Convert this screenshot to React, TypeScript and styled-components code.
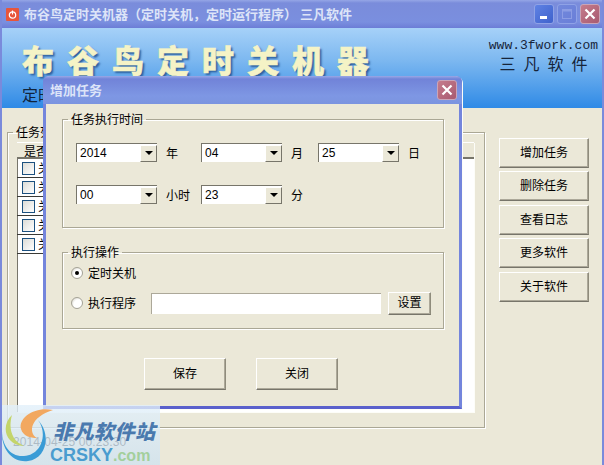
import React from 'react'
import styled, { createGlobalStyle } from 'styled-components'

const CJK = `"Noto Sans CJK SC", "Liberation Sans", sans-serif`

const GlobalStyle = createGlobalStyle`
  html, body {
    margin: 0;
    padding: 0;
    background: #ebe8d8;
  }
  * {
    box-sizing: border-box;
  }
`

const Window = styled.div`
  position: relative;
  width: 604px;
  height: 465px;
  overflow: hidden;
  display: flex;
  flex-direction: column;
  background: #ebe8d8;
  border-left: 2px solid #7a8adb;
  border-right: 2px solid #7a8adb;
  font: 12px/16px ${CJK};
  color: #000;
`

const TitleBar = styled.div`
  flex: none;
  height: 28px;
  margin: 0 -2px;
  padding: 0 4px 0 6px;
  display: flex;
  align-items: center;
  background: linear-gradient(180deg, #95a6e6 0, #7a8cdb 3px, #7a8fdf 22px, #6c7dd6 28px);
`

const TitleText = styled.span`
  flex: 1;
  margin-left: 5px;
  font-size: 13px;
  font-weight: 700;
  color: #dde4f8;
  white-space: pre;
`

const CaptionButton = styled.div<{ $tone: 'min' | 'max' | 'close' }>`
  width: 20px;
  height: 20px;
  margin-left: 3px;
  border-radius: 3px;
  border: 1px solid ${p => (p.$tone === 'close' ? '#c9a5b8' : '#8fa2e6')};
  display: flex;
  align-items: center;
  justify-content: center;
  background: ${p =>
    p.$tone === 'close'
      ? 'linear-gradient(135deg, #c57c8c, #a85a70)'
      : p.$tone === 'min'
        ? 'linear-gradient(135deg, #5f82e4, #3f62cc)'
        : 'linear-gradient(135deg, #7288dc, #6a7fd8)'};
`

const Banner = styled.div`
  flex: none;
  height: 80px;
  padding: 10px 4px 0 20px;
  display: flex;
  justify-content: space-between;
  background: linear-gradient(180deg, #a6d1f8 0, #7db8f0 40%, #2f8ae6 100%);
`

const BannerTitle = styled.div`
  margin-top: 1px;
  font-size: 32px;
  line-height: 40px;
  font-weight: 900;
  letter-spacing: 13px;
  color: #f5f3c6;
  -webkit-text-stroke: 0.5px #f5f3c6;
  text-shadow: 2px 2px 2px #2c5f9e;
  white-space: nowrap;
`

const BannerSub = styled.div`
  font-size: 16px;
  line-height: 20px;
  margin-top: 5px;
  color: #10243c;
`

const BannerVendor = styled.div`
  text-align: center;
  color: #16243a;
`

const VendorUrl = styled.div`
  font: 13px/16px "Liberation Mono", monospace;
`

const VendorName = styled.div`
  font-size: 16px;
  line-height: 18px;
  letter-spacing: 8px;
  margin-right: -8px;
`

const Body = styled.div`
  flex: 1;
  min-height: 0;
  padding: 17px 0 0 5px;
  display: flex;
  gap: 14px;
`

const Group = styled.fieldset<{ $width: number; $height: number }>`
  margin: 0;
  min-width: 0;
  width: ${p => p.$width}px;
  height: ${p => p.$height}px;
  padding: 0;
  border: 1px solid #aaa795;
  box-shadow: 1px 1px 0 #fff, inset 1px 1px 0 #fff;
`

const GroupLegend = styled.legend`
  margin-left: 5px;
  padding: 0 3px;
  font-size: 12px;
  line-height: 14px;
`

const GroupContent = styled.div<{ $top: number; $left: number }>`
  padding: ${p => p.$top}px 0 0 ${p => p.$left}px;
`

const TaskList = styled.div`
  width: 457px;
  height: 270px;
  background: #fff;
  box-shadow: inset 1px 1px 0 #77756a, 1px 1px 0 #fdfdf8;
`

const ListHeader = styled.div`
  height: 17px;
  padding: 0 0 0 7px;
  background: #ebe8d8;
  border-top: 1px solid #fff;
  border-bottom: 2px solid #77756a;
  font-size: 12px;
  line-height: 16px;
`

const ListRow = styled.div`
  width: 300px;
  height: 19px;
  padding-left: 5px;
  display: flex;
  align-items: center;
  gap: 3px;
  border-bottom: 1px solid #3a3a36;
  font-size: 12px;
`

const CheckBox = styled.span`
  width: 13px;
  height: 13px;
  border: 1px solid #1c5180;
  background: linear-gradient(135deg, #dcdcd7, #fff);
`

const SideColumn = styled.div`
  margin-top: 13px;
  display: flex;
  flex-direction: column;
  gap: 3.4px;
`

const Button = styled.button<{ $w: number; $h: number }>`
  width: ${p => p.$w}px;
  height: ${p => p.$h}px;
  padding: 0 0 2px;
  background: #ebe8d8;
  border: 1px solid;
  border-color: #fff #8f8c7c #77756a #fff;
  box-shadow: inset -1px -1px 0 #aca899;
  font: 12px/16px ${CJK};
  color: #000;
`

const StatusLine = styled.div`
  flex: none;
  height: 37px;
  padding: 6px 0 0 11px;
  font: 12px/16px "Liberation Sans", sans-serif;
  color: #333;
  letter-spacing: 0.1px;
`

/* the dialog floats over the main window */
const Dialog = styled.div`
  position: absolute;
  left: 41px;
  top: 76px;
  width: 419px;
  height: 333px;
  display: flex;
  flex-direction: column;
  background: #ebe8d8;
  border: 3px solid #7485dc;
  border-top: 0;
  border-bottom-color: #5a60cc;
  border-radius: 6px 6px 0 0;
  box-shadow: 1px 1px 0 #fdfdf8;
`

const DialogTitleBar = styled.div`
  flex: none;
  height: 28px;
  margin: 0 -3px;
  padding: 0 5px 0 7px;
  display: flex;
  align-items: center;
  justify-content: space-between;
  border-radius: 6px 6px 0 0;
  background: linear-gradient(180deg, #99a8e6 0, #7183d8 3px, #7e97e4 20px, #7b94e0 28px);
  font-size: 13px;
  font-weight: 700;
  color: #dde4f8;
`

const DialogBody = styled.div`
  flex: 1;
  padding: 8px 16px 0;
`

const GroupGap = styled.div`
  height: 17px;
`

const FieldRow = styled.div`
  height: 19px;
  margin-bottom: 23px;
  display: flex;
  align-items: center;
`

const Combo = styled.div`
  width: 81px;
  height: 19px;
  padding-left: 4px;
  display: flex;
  align-items: center;
  justify-content: space-between;
  background: #fff;
  box-shadow: inset 1px 1px 0 #77756a;
  font: 12px/16px "Liberation Sans", sans-serif;
`

const ComboArrow = styled.span`
  width: 17px;
  height: 17px;
  margin-top: 1px;
  display: flex;
  align-items: center;
  justify-content: center;
  background: #ebe8d8;
  border: 1px solid;
  border-color: #fff #77756a #77756a #fff;

  &::after {
    content: '';
    border-style: solid;
    border-width: 4px 4px 0;
    border-color: #000 transparent transparent;
  }
`

const FieldLabel = styled.span<{ $w: number }>`
  width: ${p => p.$w}px;
  padding-left: 9px;
  font-size: 12px;
`

const RadioRow = styled.div<{ $mt?: number }>`
  height: 22px;
  margin-top: ${p => p.$mt || 0}px;
  display: flex;
  align-items: center;
  gap: 5px;
`

const Radio = styled.span<{ $on?: boolean }>`
  width: 12px;
  height: 12px;
  border-radius: 50%;
  display: flex;
  align-items: center;
  justify-content: center;
  background: radial-gradient(circle at 65% 65%, #fff 50%, #c9c6b8);
  border: 1px solid #a5a397;

  &::after {
    content: '';
    width: 4px;
    height: 4px;
    border-radius: 50%;
    background: ${p => (p.$on ? '#000' : 'transparent')};
  }
`

const PathInput = styled.div`
  width: 230px;
  height: 21px;
  margin-left: 10px;
  background: #fff;
  box-shadow: inset 1px 1px 0 #aca899;
`

const InlineButton = styled(Button)`
  margin-left: 2px;
`

const DialogFooter = styled.div`
  margin-top: 29px;
  padding-left: 82px;
  display: flex;
  gap: 30px;
`

/* semi transparent site stamp lying over the bottom left corner */
const Stamp = styled.div`
  position: absolute;
  left: -2px;
  top: 405px;
  width: 160px;
  height: 60px;
  background: linear-gradient(180deg, rgba(226, 240, 250, 0.8), rgba(205, 226, 242, 0.72));
`

const StampLogo = styled.svg`
  position: absolute;
  left: 0;
  top: 0;
`

const StampName = styled.div`
  position: absolute;
  left: 53px;
  top: 14px;
  font-size: 20px;
  line-height: 24px;
  font-weight: 900;
  font-style: italic;
  letter-spacing: 0.5px;
  color: #3b6ea8;
  opacity: 0.9;
  white-space: nowrap;
`

const StampDomain = styled.div`
  position: absolute;
  left: 50px;
  top: 40px;
  font: 700 18px/20px "Liberation Sans", sans-serif;
  color: #4a9ccf;
  white-space: nowrap;
`

const StampDomainTail = styled.span`
  font-size: 16px;
  color: #a3cf9c;
`

const CloseGlyph = () => (
  <svg width="12" height="12" viewBox="0 0 12 12">
    <path d="M1.5 1.5l9 9M10.5 1.5l-9 9" stroke="#fff" strokeWidth="2.2" fill="none" />
  </svg>
)

const AppIcon = () => (
  <svg width="13" height="13" viewBox="0 0 13 13">
    <rect width="13" height="13" rx="1" fill="#e8553a" />
    <circle cx="6.5" cy="7" r="3.2" fill="none" stroke="#fff" strokeWidth="1.2" />
    <path d="M6.5 2.5v4" stroke="#fff" strokeWidth="1.2" />
  </svg>
)

const ROW_COUNT = [0, 1, 2, 3, 4]
const SIDE_ACTIONS = ['增加任务', '删除任务', '查看日志', '更多软件', '关于软件']
// full width brackets and comma, as the caption shows them
const WINDOW_TITLE = '布谷鸟定时关机器\uFF08定时关机\uFF0C定时运行程序\uFF09 三凡软件'

const App: React.FunctionComponent = () => (
  <>
    <GlobalStyle />
    <Window>
      <TitleBar>
        <AppIcon />
        <TitleText>{WINDOW_TITLE}</TitleText>
        <CaptionButton $tone="min">
          <svg width="12" height="12" viewBox="0 0 12 12">
            <rect x="2" y="8" width="7" height="3" fill="#fff" />
          </svg>
        </CaptionButton>
        <CaptionButton $tone="max">
          <svg width="12" height="12" viewBox="0 0 12 12">
            <rect x="1.5" y="1.5" width="9" height="9" fill="none" stroke="#8c9de4" />
            <rect x="1.5" y="1.5" width="9" height="2" fill="#8c9de4" />
          </svg>
        </CaptionButton>
        <CaptionButton $tone="close">
          <CloseGlyph />
        </CaptionButton>
      </TitleBar>

      <Banner>
        <div>
          <BannerTitle>布谷鸟定时关机器</BannerTitle>
          <BannerSub>定时关机</BannerSub>
        </div>
        <BannerVendor>
          <VendorUrl>www.3fwork.com</VendorUrl>
          <VendorName>三凡软件</VendorName>
        </BannerVendor>
      </Banner>

      <Body>
        <Group $width={478} $height={303}>
          <GroupLegend>任务列表</GroupLegend>
          <GroupContent $top={3} $left={9}>
            <TaskList>
              <ListHeader>是否启用</ListHeader>
              {ROW_COUNT.map(i => (
                <ListRow key={i}>
                  <CheckBox />
                  <span>关机</span>
                </ListRow>
              ))}
            </TaskList>
          </GroupContent>
        </Group>
        <SideColumn>
          {SIDE_ACTIONS.map(label => (
            <Button key={label} $w={90} $h={30}>
              {label}
            </Button>
          ))}
        </SideColumn>
      </Body>

      <StatusLine>2014-04-25 00:23:30</StatusLine>

      <Dialog>
        <DialogTitleBar>
          <span>增加任务</span>
          <CaptionButton $tone="close">
            <CloseGlyph />
          </CaptionButton>
        </DialogTitleBar>
        <DialogBody>
          <Group $width={382} $height={116}>
            <GroupLegend>任务执行时间</GroupLegend>
            <GroupContent $top={17} $left={13}>
              <FieldRow>
                <Combo>
                  2014
                  <ComboArrow />
                </Combo>
                <FieldLabel $w={44}>年</FieldLabel>
                <Combo>
                  04
                  <ComboArrow />
                </Combo>
                <FieldLabel $w={36}>月</FieldLabel>
                <Combo>
                  25
                  <ComboArrow />
                </Combo>
                <FieldLabel $w={30}>日</FieldLabel>
              </FieldRow>
              <FieldRow>
                <Combo>
                  00
                  <ComboArrow />
                </Combo>
                <FieldLabel $w={44}>小时</FieldLabel>
                <Combo>
                  23
                  <ComboArrow />
                </Combo>
                <FieldLabel $w={36}>分</FieldLabel>
              </FieldRow>
            </GroupContent>
          </Group>

          <GroupGap />

          <Group $width={382} $height={84}>
            <GroupLegend>执行操作</GroupLegend>
            <GroupContent $top={3} $left={8}>
              <RadioRow>
                <Radio $on />
                定时关机
              </RadioRow>
              <RadioRow $mt={8}>
                <Radio />
                执行程序
                <PathInput />
                <InlineButton $w={43} $h={23}>
                  设置
                </InlineButton>
              </RadioRow>
            </GroupContent>
          </Group>

          <DialogFooter>
            <Button $w={82} $h={32}>
              保存
            </Button>
            <Button $w={82} $h={32}>
              关闭
            </Button>
          </DialogFooter>
        </DialogBody>
      </Dialog>

      <Stamp>
        <StampLogo width="60" height="60" viewBox="0 0 60 60">
          <path d="M12 10 C1 20 4 40 24 41 C12 36 8 24 12 10Z" fill="#c4d56a" />
          <path d="M53 5 C36 1 18 12 21 24 C23 31 30 33 37 33 C28 28 30 12 53 5Z" fill="#f2a860" />
          <path
            d="M38 15 C48 28 42 50 24 51 C10 52 2 40 2 26 C1 46 14 58 28 56 C46 54 52 30 38 15Z"
            fill="#3a9cd6"
          />
        </StampLogo>
        <StampName>非凡软件站</StampName>
        <StampDomain>
          CRSKY<StampDomainTail>.com</StampDomainTail>
        </StampDomain>
      </Stamp>
    </Window>
  </>
)

export default App
